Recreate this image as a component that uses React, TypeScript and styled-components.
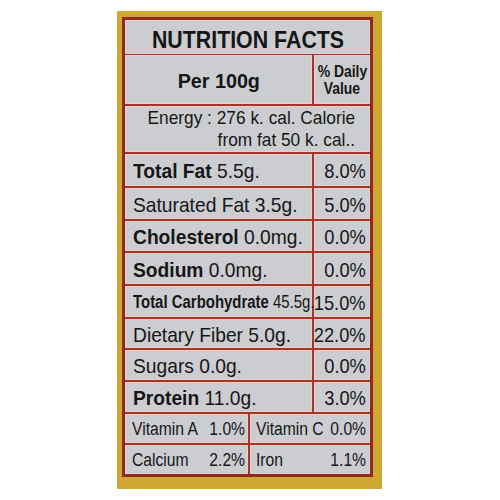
import styled, { createGlobalStyle } from 'styled-components';

const GlobalStyle = createGlobalStyle`
  body {
    margin: 0;
    background: #ffffff;
    font-family: 'Liberation Sans', Arial, sans-serif;
    color: #161616;
  }
`;

type Nutrient = {
  bold?: string;
  rest: string;
  dv: string;
  height: number;
  size?: number;
  squeeze?: number;
};

const nutrients: Array<Nutrient> = [
  { bold: 'Total Fat', rest: ' 5.5g.', dv: '8.0%', height: 32 },
  { rest: 'Saturated Fat 3.5g.', dv: '5.0%', height: 31 },
  { bold: 'Cholesterol', rest: ' 0.0mg.', dv: '0.0%', height: 30 },
  { bold: 'Sodium', rest: ' 0.0mg.', dv: '0.0%', height: 31 },
  { bold: 'Total Carbohydrate', rest: ' 45.5g.', dv: '15.0%', height: 31, size: 18, squeeze: 0.83 },
  { rest: 'Dietary Fiber 5.0g.', dv: '22.0%', height: 29 },
  { rest: 'Sugars 0.0g.', dv: '0.0%', height: 30 },
  { bold: 'Protein', rest: ' 11.0g.', dv: '3.0%', height: 30 },
];

const minerals = [
  { left: ['Vitamin A', '1.0%'], right: ['Vitamin C', '0.0%'], height: 29 },
  { left: ['Calcium', '2.2%'], right: ['Iron', '1.1%'], height: 29 },
];

const Page = styled.div`
  padding: 11px 0 0 117px;
`;

// the mustard box the printed label sits on
const Pack = styled.div`
  box-sizing: border-box;
  width: 265px;
  height: 478px;
  padding: 6px 9px 12px 5px;
  background: #d0a731;
`;

const Table = styled.div`
  box-sizing: border-box;
  width: 251px;
  display: flex;
  flex-direction: column;
  gap: 2px;
  border: 3px solid #8e2b1f;
  background: #a5342a;
`;

const Row = styled.div<{ $cols: string; $h: number }>`
  display: grid;
  grid-template-columns: ${(p) => p.$cols};
  column-gap: 2px;
  height: ${(p) => p.$h}px;
`;

const Cell = styled.div<{ $justify?: string; $pad?: string }>`
  box-sizing: border-box;
  display: flex;
  align-items: center;
  justify-content: ${(p) => p.$justify || 'flex-start'};
  padding: ${(p) => p.$pad || '2px 0 0 8px'};
  background: #cccdd0;
  box-shadow: inset 0 0 0 1px #ebcfca;
  white-space: nowrap;
  min-width: 0;
`;

// the print uses a condensed grotesque, so glyphs are narrowed horizontally
const Squeeze = styled.span<{ $scale: number; $origin?: string; $size: number; $bold?: boolean }>`
  display: inline-block;
  flex-shrink: ${(p) => (p.$origin === 'right' ? 0 : 1)};
  min-width: 0;
  font-size: ${(p) => p.$size}px;
  font-weight: ${(p) => (p.$bold ? 700 : 400)};
  transform: scaleX(${(p) => p.$scale});
  transform-origin: ${(p) => p.$origin || 'left'} center;
  white-space: nowrap;
`;

const Bold = styled.b`
  font-weight: 700;
`;

const EnergyCell = styled(Cell)`
  flex-direction: column;
  align-items: flex-end;
  justify-content: center;
  padding: 0 15px 0 0;
  line-height: 22px;
`;

const DailyValue = styled(Cell)`
  flex-direction: column;
  justify-content: center;
  padding: 1px 0 0;
  line-height: 17px;
`;

export default function App() {
  return (
    <Page>
      <GlobalStyle />
      <Pack>
        <Table>
          <Row $cols="1fr" $h={33}>
            <Cell $justify="center" $pad="6px 0 0">
              <Squeeze $scale={0.89} $origin="center" $size={24} $bold>
                NUTRITION FACTS
              </Squeeze>
            </Cell>
          </Row>
          <Row $cols="187px 56px" $h={49}>
            <Cell $justify="center" $pad="3px 0 0">
              <Squeeze $scale={0.94} $origin="center" $size={21} $bold>
                Per 100g
              </Squeeze>
            </Cell>
            <DailyValue>
              <Squeeze $scale={0.87} $origin="center" $size={16} $bold>
                % Daily
              </Squeeze>
              <Squeeze $scale={0.87} $origin="center" $size={16} $bold>
                Value
              </Squeeze>
            </DailyValue>
          </Row>
          <Row $cols="1fr" $h={46}>
            <EnergyCell>
              <Squeeze $scale={0.91} $origin="right" $size={19}>
                Energy : 276 k. cal. Calorie
              </Squeeze>
              <Squeeze $scale={0.91} $origin="right" $size={19}>
                from fat 50 k. cal..
              </Squeeze>
            </EnergyCell>
          </Row>
          {nutrients.map((n) => (
            <Row key={n.dv + n.rest} $cols="187px 56px" $h={n.height}>
              <Cell>
                <Squeeze $scale={n.squeeze || 0.915} $size={n.size || 21}>
                  {n.bold && <Bold>{n.bold}</Bold>}
                  {n.rest}
                </Squeeze>
              </Cell>
              <Cell $justify="flex-end" $pad="2px 4px 0 0">
                <Squeeze $scale={0.87} $origin="right" $size={21}>
                  {n.dv}
                </Squeeze>
              </Cell>
            </Row>
          ))}
          {minerals.map((m) => (
            <Row key={m.left[0]} $cols="123px 120px" $h={m.height}>
              <Cell $justify="space-between" $pad="2px 3px 0 7px">
                <Squeeze $scale={0.87} $size={18}>
                  {m.left[0]}
                </Squeeze>
                <Squeeze $scale={0.87} $origin="right" $size={18}>
                  {m.left[1]}
                </Squeeze>
              </Cell>
              <Cell $justify="space-between" $pad="2px 4px 0 6px">
                <Squeeze $scale={0.87} $size={18}>
                  {m.right[0]}
                </Squeeze>
                <Squeeze $scale={0.87} $origin="right" $size={18}>
                  {m.right[1]}
                </Squeeze>
              </Cell>
            </Row>
          ))}
        </Table>
      </Pack>
    </Page>
  );
}
